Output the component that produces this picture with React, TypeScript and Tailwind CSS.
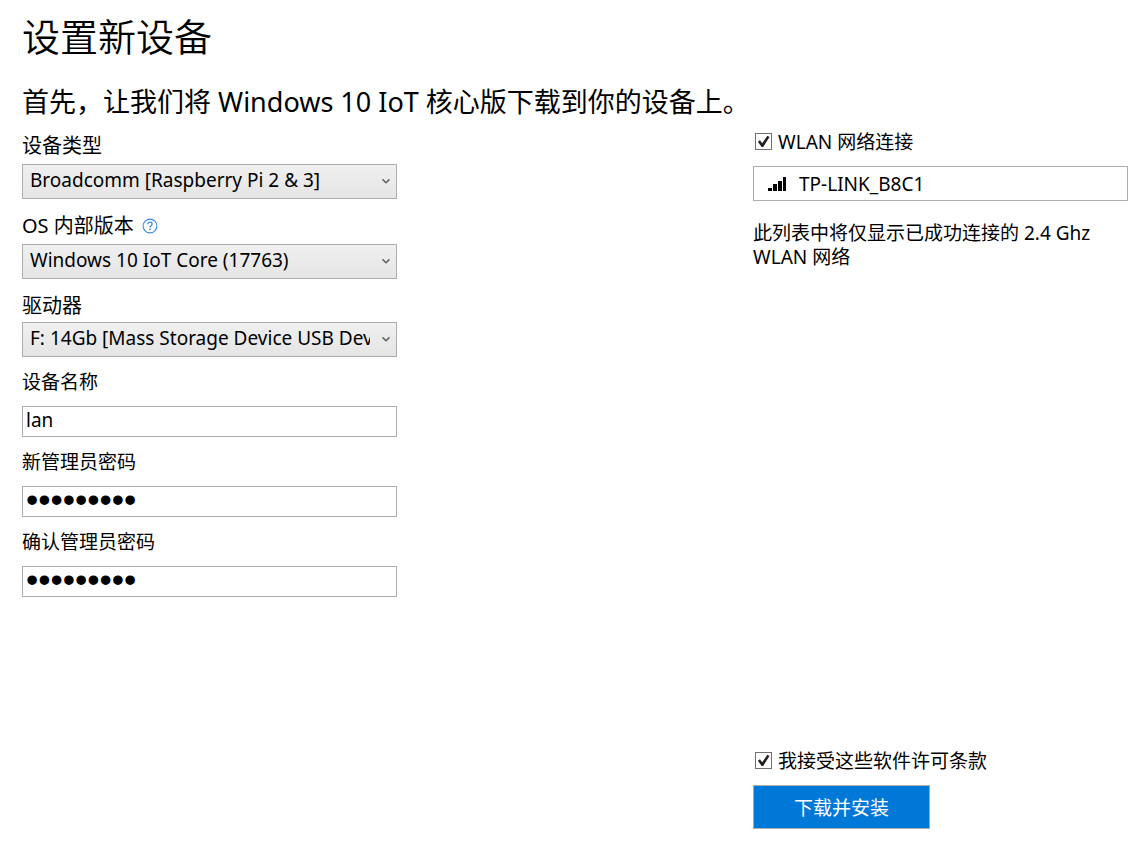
import { useState } from "react";
import type { ReactNode } from "react";

function Chevron() {
  return (
    <svg
      className="pointer-events-none absolute top-1/2 right-[7px] h-2 w-2 -translate-y-1/2"
      viewBox="0 0 8 8"
      fill="none"
      stroke="#606060"
      strokeWidth="1.5"
      aria-hidden="true"
    >
      <path d="M0.5 1.4 4 4.7 7.5 1.4" />
    </svg>
  );
}

function HelpIcon() {
  return (
    <svg className="h-4 w-4" viewBox="0 0 16 16" fill="none" stroke="#3b8be0" aria-hidden="true">
      <circle cx="8" cy="8" r="6.9" strokeWidth="1.1" />
      <path d="M5.9 6.3c0-1.3.9-2.1 2.1-2.1s2.1.8 2.1 1.9c0 1.6-2.1 1.7-2.1 3.5" strokeWidth="1.3" />
      <path d="M8 10.6v1.4" strokeWidth="1.4" />
    </svg>
  );
}

function SignalIcon() {
  return (
    <svg className="h-4 w-[18px] shrink-0" viewBox="0 0 18 16" fill="#000" aria-hidden="true">
      <rect x="0" y="12" width="4" height="3" />
      <rect x="5" y="8" width="4" height="7" />
      <rect x="10" y="5" width="4" height="10" />
      <rect x="15" y="1" width="3" height="14" />
    </svg>
  );
}

interface SelectFieldProps {
  id: string;
  label: string;
  option: string;
  compact?: boolean;
  children?: ReactNode;
}

function SelectField({ id, label, option, compact = false, children }: SelectFieldProps) {
  return (
    <div className={compact ? "flex flex-col gap-1" : "flex flex-col gap-1.5"}>
      <div className="flex h-[26px] items-end gap-2">
        <label htmlFor={id} className="text-[20px] leading-6">
          {label}
        </label>
        {children && <span className="flex h-6 items-center">{children}</span>}
      </div>
      <div className="relative">
        <select
          id={id}
          className="block h-[35px] w-full appearance-none overflow-hidden border border-[#acacac] bg-linear-to-b from-[#f0f0f0] to-[#e5e5e5] pr-[26px] pb-1 pl-[7px] text-[19px] leading-7 text-clip whitespace-nowrap"
        >
          <option>{option}</option>
        </select>
        <Chevron />
      </div>
    </div>
  );
}

interface TextFieldProps {
  id: string;
  label: string;
  type: "text" | "password";
  initial: string;
}

function TextField({ id, label, type, initial }: TextFieldProps) {
  const [value, setValue] = useState(initial);
  const textStyle =
    type === "password" ? "font-['Liberation_Sans',sans-serif] text-[35px]" : "text-[19px]";
  return (
    <div className="flex flex-col gap-3">
      <label htmlFor={id} className="text-[19px] leading-6">
        {label}
      </label>
      <input
        id={id}
        type={type}
        value={value}
        onChange={(e) => setValue(e.target.value)}
        className={`block h-[31px] w-full border border-[#abadb3] bg-white px-[3px] pb-1 leading-6 ${textStyle}`}
      />
    </div>
  );
}

function CheckField({ id, label }: { id: string; label: string }) {
  const [checked, setChecked] = useState(true);
  return (
    <div className="flex h-6 items-start gap-1.5 pl-0.5">
      <span className="relative mt-[3px] flex">
        <input
          id={id}
          type="checkbox"
          checked={checked}
          onChange={(e) => setChecked(e.target.checked)}
          className="h-[17px] w-[17px] appearance-none border border-[#707070] bg-white"
        />
        {checked && (
          <svg
            className="pointer-events-none absolute inset-0 h-[17px] w-[17px]"
            viewBox="0 0 17 17"
            fill="#212121"
            aria-hidden="true"
          >
            <path d="M2.9 8.7 4.9 7.3 7.2 10.2 12.4 2.7 14.5 3.9 8.2 13.9 6.6 13.9Z" />
          </svg>
        )}
      </span>
      <label htmlFor={id} className="text-[19px] leading-6">
        {label}
      </label>
    </div>
  );
}

export default function App() {
  return (
    <main className="flex min-h-screen flex-col bg-white pt-2.5 pr-[18px] pb-[39px] pl-[22px] font-['Noto_Sans','Noto_Sans_CJK_SC',sans-serif] text-black">
      <h1 className="text-[38px] leading-[52px] font-[350]">设置新设备</h1>
      <h2 className="mt-[22px] text-[27px] leading-9">首先，让我们将 Windows 10 IoT 核心版下载到你的设备上。</h2>
      <div className="mt-2.5 flex grow justify-between gap-8">
        <section className="flex w-[375px] flex-col gap-[13px] pt-0.5">
          <SelectField id="device-type" label="设备类型" option="Broadcomm [Raspberry Pi 2 & 3]" />
          <SelectField id="os-build" label="OS 内部版本" option="Windows 10 IoT Core (17763)">
            <button type="button" aria-label="帮助">
              <HelpIcon />
            </button>
          </SelectField>
          <SelectField id="drive" label="驱动器" option="F: 14Gb [Mass Storage Device USB Device]" compact />
          <TextField id="device-name" label="设备名称" type="text" initial="lan" />
          <TextField id="password" label="新管理员密码" type="password" initial="password1" />
          <TextField id="password-confirm" label="确认管理员密码" type="password" initial="password1" />
        </section>
        <section className="flex w-[375px] flex-col">
          <CheckField id="wlan" label="WLAN 网络连接" />
          <button
            type="button"
            className="mt-3 flex h-[35px] w-full items-center gap-[13px] border border-[#abadb3] bg-white pl-3.5 text-left text-[19px] leading-6"
          >
            <SignalIcon />
            TP-LINK_B8C1
          </button>
          <p className="mt-5 text-[19px] leading-6">此列表中将仅显示已成功连接的 2.4 Ghz WLAN 网络</p>
          <div className="mt-auto flex flex-col items-start gap-3">
            <CheckField id="license" label="我接受这些软件许可条款" />
            <button
              type="button"
              className="h-11 w-[177px] border border-[#acacac] bg-[#0078d7] pt-0.5 text-[19px] leading-6 text-white"
            >
              下载并安装
            </button>
          </div>
        </section>
      </div>
    </main>
  );
}
